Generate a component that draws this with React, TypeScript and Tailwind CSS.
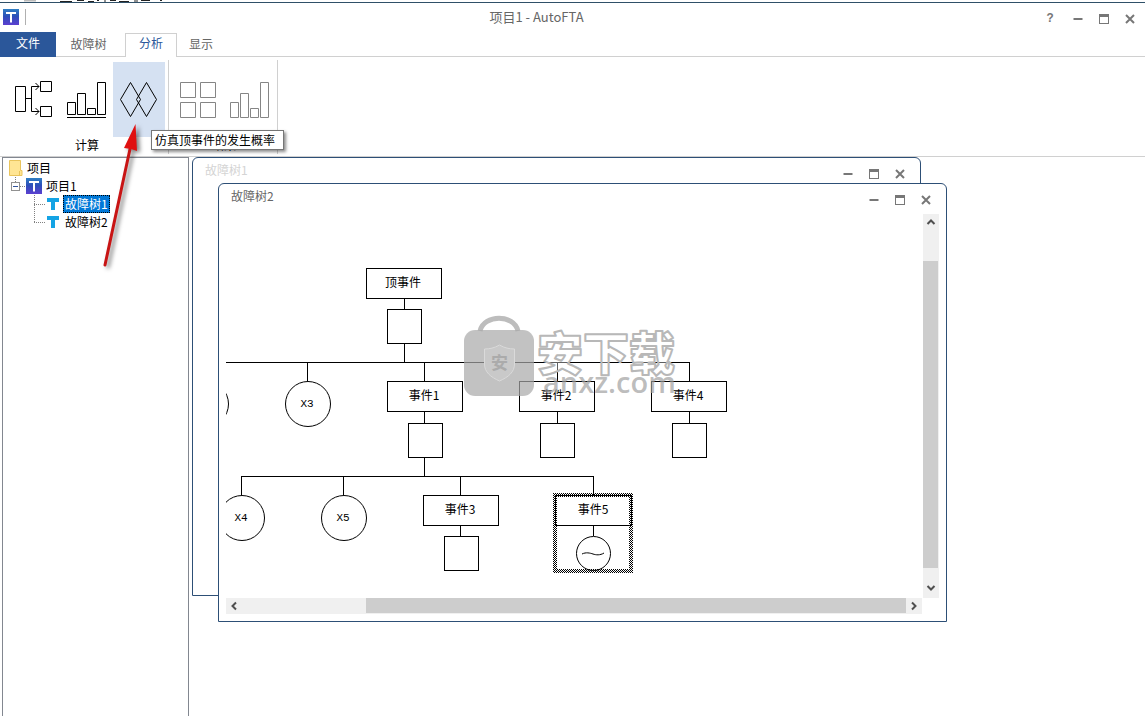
import type { ReactNode } from "react";
import clsx from "clsx";

const tabs = [
  { label: "故障树", active: false },
  { label: "分析", active: true },
  { label: "显示", active: false },
];

const events = [
  { label: "顶事件", x: 366, y: 268, gateY: 309 },
  { label: "事件1", x: 387, y: 381, gateY: 423 },
  { label: "事件2", x: 519, y: 381, gateY: 423 },
  { label: "事件4", x: 651, y: 381, gateY: 423 },
  { label: "事件3", x: 423, y: 495, gateY: 536 },
];

const basics = [
  { label: "X3", cx: 308, cy: 404 },
  { label: "X4", cx: 242, cy: 518 },
  { label: "X5", cx: 344, cy: 518 },
];

const AppIcon = () => (
  <svg className="h-4 w-4 shrink-0" viewBox="0 0 16 16" aria-hidden="true">
    <defs>
      <linearGradient id="appIcon" x1="0" y1="0" x2="0" y2="1">
        <stop offset="0" stopColor="#2f7fc4" />
        <stop offset="0.45" stopColor="#2c4fb8" />
        <stop offset="1" stopColor="#5b3fd0" />
      </linearGradient>
    </defs>
    <rect width="16" height="16" fill="url(#appIcon)" />
    <path d="M3 3h10v2H9v8.500H7V5H3z" fill="#fff" />
  </svg>
);

const FolderIcon = () => (
  <svg className="h-4 w-3.5 shrink-0" viewBox="0 0 14 16" aria-hidden="true">
    <path d="M.5 .5h11v10h1.5v5H.5z" fill="#ffe594" stroke="#e9c45c" />
    <path d="M10.5 11v4" stroke="#e9c45c" />
  </svg>
);

const TreeIcon = () => (
  <svg className="h-3.5 w-3.5 shrink-0" viewBox="0 0 14 14" aria-hidden="true">
    <path d="M1 1h12v4H9v8H5V5H1z" fill="#14a3e4" />
  </svg>
);

const WindowControls = ({ help = false }: { help?: boolean }) => (
  <div className="flex items-center text-[#777]">
    {help && (
      <button type="button" aria-label="帮助" className="mr-0.5 h-5 w-[26px] font-['Liberation_Mono'] text-xs font-bold">
        ?
      </button>
    )}
    <button type="button" aria-label="最小化" className="flex h-5 w-[26px] items-center justify-center">
      <svg className="h-3 w-3" viewBox="0 0 12 12">
        <path d="M1.5 6h9" stroke="currentColor" strokeWidth="2" />
      </svg>
    </button>
    <button type="button" aria-label="最大化" className="flex h-5 w-[26px] items-center justify-center">
      <svg className="h-3 w-3" viewBox="0 0 12 12" shapeRendering="crispEdges">
        <path d="M1.5 1.5h9v9h-9z" fill="none" stroke="currentColor" />
        <path d="M1 2.5h10" stroke="currentColor" strokeWidth="3" />
      </svg>
    </button>
    <button type="button" aria-label="关闭" className="flex h-5 w-[26px] items-center justify-center">
      <svg className="h-3 w-3" viewBox="0 0 12 12">
        <path d="M2 2l8 8M10 2l-8 8" stroke="currentColor" strokeWidth="2" />
      </svg>
    </button>
  </div>
);

interface RibbonButtonProps {
  label: string;
  active?: boolean;
  disabled?: boolean;
  children: ReactNode;
}

const RibbonButton = ({ label, active, disabled, children }: RibbonButtonProps) => (
  <button
    type="button"
    aria-label={label}
    disabled={disabled}
    className={clsx("h-[75px] w-[52px]", active && "bg-[#d5e1f2]", disabled ? "text-[#858585]" : "text-black")}
  >
    <svg className="h-[75px] w-[52px]" viewBox="0 0 52 75" fill="none" stroke="currentColor">
      {children}
    </svg>
  </button>
);

const Ribbon = () => (
  <div className="relative flex h-[100px] shrink-0 border-b border-[#d0d0d0] pt-[3px] pl-[9px]">
    <div className="flex h-[94px] flex-col border-r border-[#d0d0d0] pt-0.5 pr-[3px]">
      <div className="flex">
        <RibbonButton label="最小割集">
          <path d="M6.5 24.5h10v25h-10zM31.5 19.5h11v10h-11zM31.5 44.5h11v10h-11z" />
          <path d="M17 36.5h5M30 24.5h-7.5v25H30M26.5 21l3.5 3.5l-3.5 3.5M26.5 46l3.5 3.5l-3.5 3.5" />
        </RibbonButton>
        <RibbonButton label="计算概率">
          <path d="M6.5 40.5h8v12h-8zM16.5 31.5h8v21h-8zM26.5 46.5h8v6h-8zM36.5 20.5h8v32h-8zM6 55.5h39" />
        </RibbonButton>
        <RibbonButton label="仿真" active>
          <path d="M17.5 20.5l10 17l-10 17l-10-17zM33.5 20.5l10 17l-10 17l-10-17z" />
        </RibbonButton>
      </div>
      <span className="text-center text-xs">计算</span>
    </div>
    <div className="flex h-[94px] flex-col border-r border-[#d0d0d0] pt-0.5 pr-px pl-[3px]">
      <div className="flex">
        <RibbonButton label="结果表" disabled>
          <path d="M8.5 20.5h15v15h-15zM28.5 20.5h15v15h-15zM8.5 40.5h15v15h-15zM28.5 40.5h15v15h-15z" />
        </RibbonButton>
        <RibbonButton label="结果图" disabled>
          <path d="M6.5 40.5h8v15h-8zM16.5 31.5h8v24h-8zM26.5 46.5h8v9h-8zM36.5 20.5h8v35h-8z" />
        </RibbonButton>
      </div>
      <span className="text-center text-xs">结果</span>
    </div>
    <div
      role="tooltip"
      className="absolute top-[73px] left-[151px] z-20 h-5 border border-[#767676] bg-white pr-2 pl-[3px] text-xs leading-[18px] shadow-[2px_2px_3px_rgba(0,0,0,0.45)]"
    >
      仿真顶事件的发生概率
    </div>
  </div>
);

const Branch = ({ last = false }: { last?: boolean }) => (
  <svg className="h-[18px] w-3 shrink-0" viewBox="0 0 12 18" fill="none" stroke="#808080" strokeDasharray="1 1">
    <path d={last ? "M.5 0v9" : "M.5 0v18"} />
    <path d="M0 9.5h11" />
  </svg>
);

const ProjectTree = () => (
  <aside className="ml-0.5 w-[187px] shrink-0 border border-b-0 border-[#828790] pt-px text-xs leading-[18px]">
    <ul>
      <li className="flex h-[18px] items-center gap-1 pl-1.5">
        <FolderIcon />
        项目
      </li>
      <li>
        <div className="flex h-[18px] items-center pl-2">
          <svg className="h-[18px] w-[15px] shrink-0" viewBox="0 0 15 18" fill="none" shapeRendering="crispEdges">
            <path d="M4.5 0v5M9 9.5h6" stroke="#808080" strokeDasharray="1 1" />
            <path d="M.5 5.5h8v8h-8z" fill="#fff" stroke="#919191" />
            <path d="M2 9.5h5" stroke="#33559c" />
          </svg>
          <AppIcon />
          <span className="ml-1">项目1</span>
        </div>
        <ul>
          <li className="flex h-[18px] items-center pl-[31px]">
            <Branch />
            <TreeIcon />
            <span className="ml-[3px] border border-dotted border-black bg-[#0078d7] px-px leading-4 text-white">故障树1</span>
          </li>
          <li className="flex h-[18px] items-center pl-[31px]">
            <Branch last />
            <TreeIcon />
            <span className="ml-[5px]">故障树2</span>
          </li>
        </ul>
      </li>
    </ul>
  </aside>
);

const Watermark = () => (
  <g stroke="none">
    <path d="M480 331c4-17 34-17 38 0" fill="none" stroke="#bdbdbd" strokeWidth="5" />
    <rect x="464" y="330" width="70" height="66" rx="11" fill="#a8a8a8" fillOpacity="0.7" />
    <path
      d="M499.500 345c5 3 10 4 15 4v15c0 8-6 13-15 17c-9-4-15-9-15-17v-15c5 0 10-1 15-4z"
      fill="#c9c9c9"
      stroke="#dadada"
    />
    <text x="491" y="369" fontSize="17" fontWeight="700" fill="#ababab">安</text>
    <text
      x="537"
      y="370"
      fontSize="46"
      fontWeight="900"
      fill="#fff"
      fillOpacity="0.4"
      stroke="#b8b8b8"
      strokeWidth="2"
      strokeLinejoin="round"
    >
      安下载
    </text>
    <text x="543" y="393" fontSize="29" fontWeight="600" fill="#a0a0a0" fillOpacity="0.7" className="font-['Open_Sans']">
      anxz.com
    </text>
  </g>
);

const FaultTreeCanvas = () => (
  <svg className="h-[384px] w-[697px]" viewBox="226 214 697 384" fill="none" stroke="#000">
    <defs>
      <pattern id="hatch" width="2" height="2" patternUnits="userSpaceOnUse">
        <path d="M0 0h1v1h-1zM1 1h1v1h-1z" fill="#000" stroke="none" />
      </pattern>
    </defs>

    {/* connectors */}
    <g shapeRendering="crispEdges">
      <path d="M404.500 299v10M404.500 344v18M226 362.500h463.500M307.500 362v19M424.500 362v19M557.500 362v19M689.500 362v19" />
      <path d="M424.500 412v11M557.500 412v11M689.500 412v11M424.500 458v18M241 476.500h352.500" />
      <path d="M241.500 476v19M343.500 476v19M460.500 476v19M593.500 476v19M460.500 525v11M593.500 525v11" />
    </g>

    {events.map((event) => (
      <g key={event.label}>
        <rect x={event.x + 0.5} y={event.y + 0.5} width="75" height="30" fill="#fff" />
        <rect x={event.x + 21.5} y={event.gateY + 0.5} width="34" height="34" fill="#fff" />
        <text x={event.x + 37} y={event.y + 19} fontSize="12" textAnchor="middle" fill="#000" stroke="none">
          {event.label}
        </text>
      </g>
    ))}

    <circle cx="206" cy="404" r="22.5" />
    {basics.map((basic) => (
      <g key={basic.label}>
        <circle cx={basic.cx} cy={basic.cy} r="22.5" />
        <text
          x={basic.cx - 1}
          y={basic.cy + 3}
          fontSize="11"
          textAnchor="middle"
          fill="#000"
          stroke="none"
          className="font-['Liberation_Mono']"
        >
          {basic.label}
        </text>
      </g>
    ))}

    {/* selected event */}
    <rect x="555" y="495" width="76" height="76" stroke="url(#hatch)" strokeWidth="4" shapeRendering="crispEdges" />
    <path d="M555.500 525.500v-30h76v30z" />
    <text x="593" y="514" fontSize="12" textAnchor="middle" fill="#000" stroke="none">
      事件5
    </text>
    <circle cx="593.500" cy="553.500" r="17" />
    <path d="M582 554c4-2 8-1 11 0s7 1.500 11-1" />

    <Watermark />
  </svg>
);

const chevrons = {
  up: "M4.500 10l3.500-3.500l3.500 3.500",
  down: "M4.500 6l3.500 3.500l3.500-3.500",
  left: "M10 4.500l-3.500 3.500l3.500 3.500",
  right: "M6 4.500l3.500 3.500l-3.500 3.500",
};

const ScrollButton = ({ dir, label }: { dir: keyof typeof chevrons; label: string }) => (
  <button type="button" aria-label={label} className="h-4 w-4 shrink-0">
    <svg viewBox="0 0 16 16" className="h-4 w-4" fill="none" stroke="#505050" strokeWidth="2">
      <path d={chevrons[dir]} />
    </svg>
  </button>
);

interface ChildWindowProps {
  title: string;
  active?: boolean;
  className: string;
  children?: ReactNode;
}

const ChildWindow = ({ title, active, className, children }: ChildWindowProps) => (
  <section
    className={clsx(
      "absolute h-[439px] w-[729px] rounded-t-md border border-[#2d4f76] bg-white",
      className,
    )}
  >
    <header className="flex h-[30px] items-start justify-between pr-[7px] pl-3">
      <h2 className={clsx("pt-[3px] text-xs leading-[18px]", active ? "text-[#666]" : "text-[#d4d4d4]")}>{title}</h2>
      <div className="pt-1.5">
        <WindowControls />
      </div>
    </header>
    {children}
  </section>
);

const App = () => (
  <div className="flex h-screen flex-col overflow-hidden bg-white font-['Noto_Sans_CJK_SC',sans-serif] text-black">
    <div className="h-[3px] shrink-0 border-b border-[#2f5068]">
      <svg className="h-0.5 w-44" viewBox="0 0 176 2" stroke="#222" aria-hidden="true">
        <path d="M24 .5h12" stroke="#bbb" strokeWidth="2" />
        <path d="M60 1.500h12M77 .5h7M88 1.500h6M97 .5h2M104 1h2M110 .5h6M119 1.500h10M134 1h4M141 .5h9M160 .5h2" />
      </svg>
    </div>

    <header className="flex h-[29px] shrink-0 items-start justify-between pt-1.5 pr-0.5 pl-[3px]">
      <div className="flex items-center gap-1.5">
        <AppIcon />
        <span className="h-4 w-px bg-[#b0b0b0]" />
      </div>
      <h1 className="pl-2.5 text-[13px] leading-4 text-[#666]">项目1 - AutoFTA</h1>
      <WindowControls help />
    </header>

    <nav className="flex h-[25px] shrink-0 text-xs">
      <button type="button" className="w-14 bg-[#2b579a] pb-1 text-white">
        文件
      </button>
      <div className="flex flex-1">
        {tabs.map((tab, i) => (
          <button
            key={tab.label}
            type="button"
            className={clsx(
              "border-[#d0d0d0]",
              i === 0 && "w-[69px]",
              i !== 0 && "w-[52px]",
              tab.active ? "mt-px border-x border-t pb-1.5 text-[#2b579a]" : "border-b pr-1 pb-px text-[#666]",
            )}
          >
            {tab.label}
          </button>
        ))}
        <div className="flex-1 border-b border-[#d0d0d0]" />
      </div>
    </nav>

    <Ribbon />

    <main className="flex min-h-0 flex-1">
      <ProjectTree />
      <div className="relative flex-1">
        <ChildWindow title="故障树1" className="top-0 left-[3px]" />
        <ChildWindow title="故障树2" active className="top-[26px] left-[29px]">
          <div className="flex pl-[7px]">
            <FaultTreeCanvas />
            <div className="flex w-4 flex-col bg-[#f0f0f0]">
              <ScrollButton dir="up" label="向上滚动" />
              <div className="mt-[31px] mr-px flex-1 bg-[#cdcdcd]" />
              <div className="flex h-[30px] items-end pb-0.5">
                <ScrollButton dir="down" label="向下滚动" />
              </div>
            </div>
          </div>
          <div className="mr-6 ml-[7px] flex h-4 bg-[#f0f0f0]">
            <ScrollButton dir="left" label="向左滚动" />
            <div className="mb-px ml-[124px] flex-1 bg-[#cdcdcd]" />
            <ScrollButton dir="right" label="向右滚动" />
          </div>
        </ChildWindow>
      </div>
    </main>

    <svg
      className="pointer-events-none absolute top-[120px] left-24 z-30 h-[150px] w-14 drop-shadow-[3px_2px_2px_rgba(0,0,0,0.5)]"
      viewBox="96 120 56 150"
      aria-hidden="true"
    >
      <path d="M105 265L130 149" stroke="#c81414" strokeWidth="3" strokeLinecap="round" />
      <path d="M135.500 124l1.500 27l-6-2l-7-1z" fill="#e01010" />
    </svg>
  </div>
);

export default App;
